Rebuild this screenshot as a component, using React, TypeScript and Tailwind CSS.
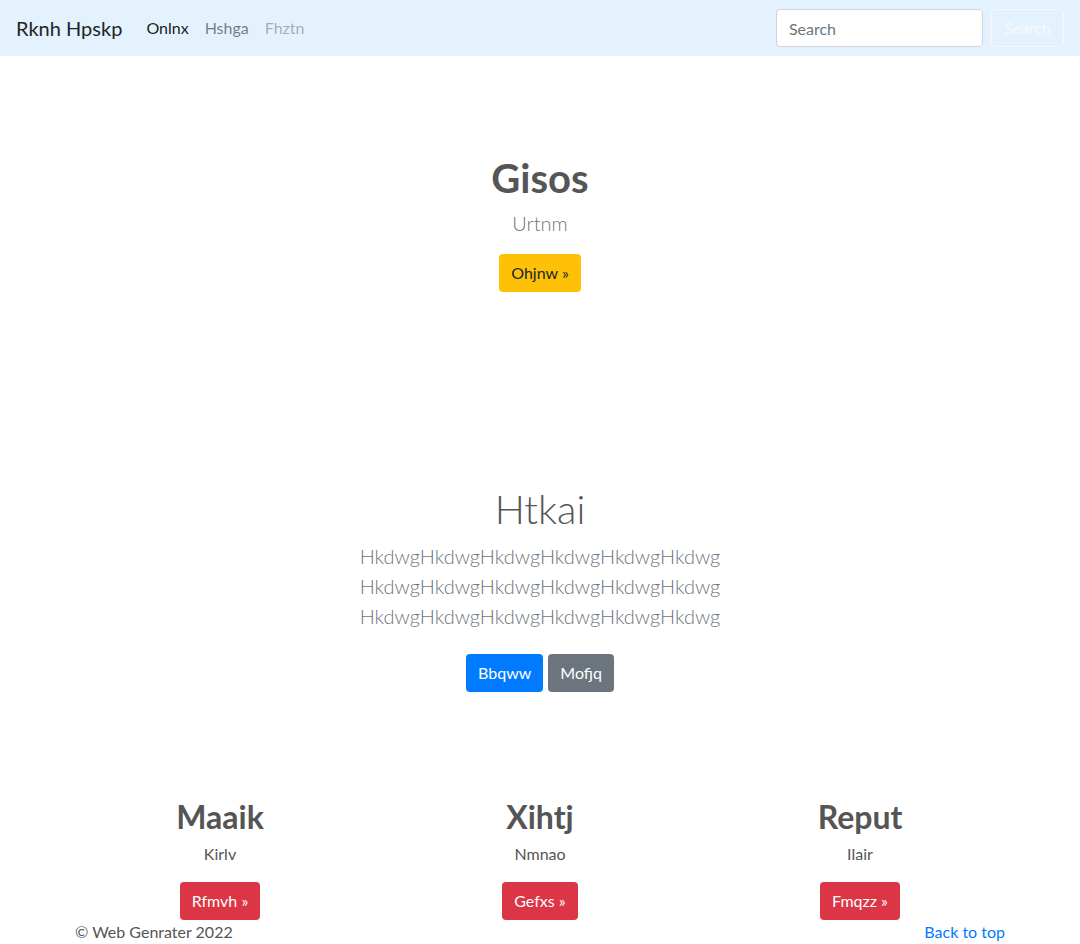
const font = { fontFamily: "Lato, 'Liberation Sans', sans-serif" };

const features = [
  { title: 'Maaik', text: 'Kirlv', action: 'Rfmvh »' },
  { title: 'Xihtj', text: 'Nmnao', action: 'Gefxs »' },
  { title: 'Reput', text: 'Ilair', action: 'Fmqzz »' },
];

function Navbar() {
  return (
    <nav className="flex h-14 items-center bg-[#e3f2fd] px-4">
      <a className="mr-4 text-[20px] leading-[30px] text-[#212529]">Rknh Hpskp</a>
      <ul className="flex text-base">
        <li><a className="block px-2 py-2 text-black/90">Onlnx</a></li>
        <li><a className="block px-2 py-2 text-black/50">Hshga</a></li>
        <li><a className="block px-2 py-2 text-black/30">Fhztn</a></li>
      </ul>
      <form className="ml-auto flex items-center">
        <input
          type="search"
          placeholder="Search"
          className="h-[38px] w-[207px] rounded border border-[#ced4da] bg-white px-3 text-base text-[#495057] placeholder:text-[#6c757d] outline-none"
        />
        <button type="button" className="ml-2 h-[38px] rounded border border-[#f8f9fa] px-3 text-base text-[#f8f9fa]">
          Search
        </button>
      </form>
    </nav>
  );
}

export default function App() {
  return (
    <div className="min-h-screen bg-white text-[#555]" style={font}>
      <Navbar />

      <section className="pt-[98px] text-center">
        <h1 className="text-[40px] font-bold leading-[48px] text-[#555]">Gisos</h1>
        <p className="mt-[6px] text-[20px] font-light leading-[30px] text-[#6c757d]">Urtnm</p>
        <button className="mt-4 h-[38px] rounded bg-[#ffc107] px-3 text-base text-[#212529]">Ohjnw »</button>
      </section>

      <section className="pt-[193px] text-center">
        <h1 className="text-[40px] font-light leading-[48px] text-[#555]">Htkai</h1>
        <div className="mt-2 text-[20px] font-light leading-[30px] text-[#6c757d]">
          <p>HkdwgHkdwgHkdwgHkdwgHkdwgHkdwg</p>
          <p>HkdwgHkdwgHkdwgHkdwgHkdwgHkdwg</p>
          <p>HkdwgHkdwgHkdwgHkdwgHkdwgHkdwg</p>
        </div>
        <div className="mt-[23px] flex justify-center gap-[5px]">
          <button className="h-[38px] rounded bg-[#007bff] px-3 text-base text-white">Bbqww</button>
          <button className="h-[38px] rounded bg-[#6c757d] px-3 text-base text-white">Mofjq</button>
        </div>
      </section>

      <div className="mx-auto mt-[106px] grid w-[960px] grid-cols-3">
        {features.map((f) => (
          <div key={f.title} className="px-[15px] text-center">
            <h2 className="text-[32px] font-bold leading-[38px] text-[#555]">{f.title}</h2>
            <p className="mt-[6px] text-base leading-6 text-[#555]">{f.text}</p>
            <button className="mt-4 h-[38px] rounded bg-[#dc3545] px-3 text-base text-white">{f.action}</button>
          </div>
        ))}
      </div>

      <footer className="mx-auto flex w-[960px] items-center justify-between px-[15px] text-base leading-6">
        <p className="text-[#555]">© Web Genrater 2022</p>
        <a className="text-[#007bff]">Back to top</a>
      </footer>
    </div>
  );
}
